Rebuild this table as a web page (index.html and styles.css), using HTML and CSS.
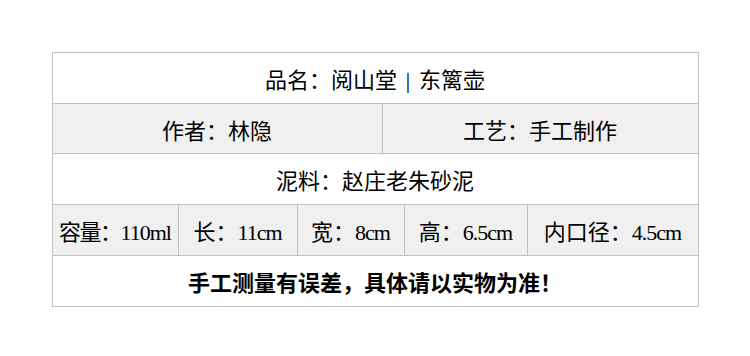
FILE: index.html
```html
<!DOCTYPE html>
<html lang="zh">
<head>
<meta charset="utf-8">
<title>东篱壶</title>
<link rel="stylesheet" href="styles.css">
</head>
<body>
<div class="spec">
  <div class="row first"><div class="cell"><span>品名：阅山堂 <span class="sep">|</span> 东篱壶</span></div></div>
  <div class="row two shade short"><div class="cell"><span>作者：林隐</span></div><div class="cell"><span>工艺：手工制作</span></div></div>
  <div class="row one"><div class="cell"><span>泥料：赵庄老朱砂泥</span></div></div>
  <div class="row five shade">
    <div class="cell tight"><span>容量：<span class="num">110ml</span></span></div>
    <div class="cell"><span>长：<span class="num">11cm</span></span></div>
    <div class="cell"><span>宽：<span class="num">8cm</span></span></div>
    <div class="cell"><span>高：<span class="num">6.5cm</span></span></div>
    <div class="cell"><span>内口径：<span class="num">4.5cm</span></span></div>
  </div>
  <div class="row one note"><div class="cell"><span>手工测量有误差，具体请以实物为准！</span></div></div>
</div>
</body>
</html>
```

FILE: styles.css
```css
* { box-sizing: border-box; }
html, body { margin: 0; padding: 0; background: #fff; }
body {
  font-family: "Liberation Serif", "Noto Sans CJK SC", serif;
  color: #000;
}
.spec {
  width: 647px;
  margin: 52px auto 0;
  border: 1px solid #c0c0c0;
}
.row {
  display: grid;
  grid-template-columns: 1fr;
  height: 51px;
  border-top: 1px solid #c0c0c0;
}
.row.first { border-top: 0; height: 50px; }
.row.short { height: 50px; }
.row.two { grid-template-columns: 329px 1fr; }
.row.five { grid-template-columns: 125px 119px 107px 123px 1fr; }
.shade { background: #f0f0f0; }
.cell {
  display: flex;
  align-items: center;
  justify-content: center;
  font-size: 22px;
  white-space: nowrap;
}
.cell + .cell { border-left: 1px solid #c0c0c0; }
.sep { padding: 0 3px; font-family: "Noto Sans CJK SC", sans-serif; font-size: 18px; }
.num { letter-spacing: -1px; }
.tight { letter-spacing: -1.5px; }
.tight .num { letter-spacing: -1px; }
.note .cell { font-weight: bold; }
```
